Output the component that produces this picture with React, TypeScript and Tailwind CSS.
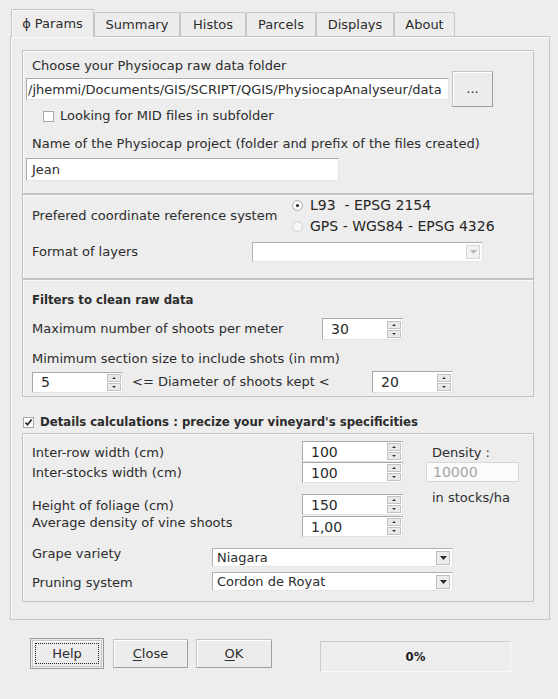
import React from 'react';

// small triangles used by spin boxes and combo boxes
function Tri({ up, w = 5, h = 3, color = '#333' }: { up?: boolean; w?: number; h?: number; color?: string }) {
  return (
    <svg width={w} height={h} viewBox={`0 0 ${w} ${h}`}>
      <path d={up ? `M${w / 2} 0L${w} ${h}H0z` : `M0 0H${w}L${w / 2} ${h}z`} fill={color} />
    </svg>
  );
}

function SpinBox({ value, className }: { value: string; className: string }) {
  return (
    <div className={`flex items-center bg-white border border-t-[#a9a9a9] border-l-[#a9a9a9] border-r-[#e2e2e2] border-b-[#e2e2e2] ${className}`}>
      <span className="flex-1 pl-[8px] text-[14px] leading-none text-[#2a2a2a]">{value}</span>
      <div className="flex flex-col gap-[1px] mr-[1px]">
        <div className="w-[14px] h-[8px] bg-[#e9e9e9] border border-[#c2c2c2] flex items-center justify-center">
          <Tri up w={4} h={2} />
        </div>
        <div className="w-[14px] h-[8px] bg-[#e9e9e9] border border-[#c2c2c2] flex items-center justify-center">
          <Tri w={4} h={2} />
        </div>
      </div>
    </div>
  );
}

function Combo({ value, className, disabled }: { value?: string; className: string; disabled?: boolean }) {
  return (
    <div className={`flex items-center bg-white border border-t-[#b0b0b0] border-l-[#b0b0b0] border-r-[#e4e4e4] border-b-[#e4e4e4] ${className}`}>
      <span className="flex-1 pl-[4px] leading-none">{value}</span>
      <div className={`w-[14px] h-[14px] mr-[2px] border flex items-center justify-center ${disabled ? 'border-[#d6d6d6] bg-[#f2f2f2]' : 'border-[#bdbdbd] bg-[#ececec]'}`}>
        <Tri w={7} h={4} color={disabled ? '#b8b8b8' : '#2a2a2a'} />
      </div>
    </div>
  );
}

function Radio({ checked, label }: { checked?: boolean; label: string }) {
  return (
    <div className="flex items-center h-[21px]">
      <div className={`w-[11px] h-[11px] rounded-full border flex items-center justify-center ${checked ? 'border-[#b0b0b0] bg-[#fafafa]' : 'border-[#d2d2d2] bg-[#f6f6f6]'}`}>
        {checked && <div className="w-[3px] h-[3px] rounded-full bg-[#222]" />}
      </div>
      <span className="ml-[7px] text-[14px] text-[#252525] whitespace-pre">{label}</span>
    </div>
  );
}

function Check({ checked }: { checked?: boolean }) {
  return (
    <div className="w-[11px] h-[11px] bg-white border border-[#a8a8a8] flex items-center justify-center">
      {checked && (
        <svg width="9" height="9" viewBox="0 0 9 9">
          <path d="M1.5 4.5L3.5 6.8L7.6 1.6" stroke="#222" strokeWidth="1.6" fill="none" />
        </svg>
      )}
    </div>
  );
}

function Button({ children, className }: { children: React.ReactNode; className: string }) {
  return (
    <div className={`flex items-center justify-center bg-[#ececec] border border-[#c4c4c4] border-b-[#9e9e9e] border-r-[#9e9e9e] shadow-[inset_1px_1px_0_#ffffff] ${className}`}>
      {children}
    </div>
  );
}

const tabs = [
  { name: 'ϕ Params', w: 'w-[83px]', active: true },
  { name: 'Summary', w: 'w-[86px]' },
  { name: 'Histos', w: 'w-[66px]' },
  { name: 'Parcels', w: 'w-[70px]' },
  { name: 'Displays', w: 'w-[78px]' },
  { name: 'About', w: 'w-[61px]' },
];

const group = 'border border-[#c3c3c3] shadow-[inset_1px_1px_0_#f9f9f9]';
// bold captions in the dialog are narrower than regular bold
const boldCaption = "font-bold font-['DejaVu_Sans_Condensed','DejaVu_Sans',sans-serif] font-stretch-condensed";

export default function App() {
  return (
    <div className="w-[558px] h-[699px] bg-[#ededed] font-['DejaVu_Sans',sans-serif] text-[13px] text-[#2c2c2c] pt-[9px] pl-[10px] overflow-hidden">
      {/* tab bar */}
      <div className="flex items-end h-[27px] pl-[1px]">
        {tabs.map((t) =>
          t.active ? (
            <div key={t.name} className={`${t.w} h-[28px] -mb-px relative z-10 bg-[#ededed] border border-b-0 border-[#c3c3c3] rounded-t-[2px] flex items-center justify-center shadow-[inset_1px_1px_0_#fafafa]`}>
              {t.name}
            </div>
          ) : (
            <div key={t.name} className={`${t.w} h-[24px] bg-[#ececec] border border-b-0 border-[#c6c6c6] rounded-t-[2px] flex items-center justify-center pt-[1px]`}>
              {t.name}
            </div>
          )
        )}
      </div>

      {/* panel */}
      <div className="w-[540px] h-[584px] border border-[#c6c6c6] shadow-[inset_1px_1px_0_#fafafa] pt-[13px] pl-[11px] pr-[15px]">
        {/* folder */}
        <div className={`${group} h-[144px] flex flex-col`}>
          <div className="pt-[7px] pl-[9px] leading-[16px]">Choose your Physiocap raw data folder</div>
          <div className="-mt-[3px] h-[36px] flex items-center">
            <div className="ml-[3px] w-[423px] h-[22px] bg-white border border-t-[#a9a9a9] border-l-[#a9a9a9] border-r-[#e4e4e4] border-b-[#e4e4e4] overflow-hidden flex items-center whitespace-nowrap">
              <span className="pl-[1px] leading-none">/jhemmi/Documents/GIS/SCRIPT/QGIS/PhysiocapAnalyseur/data</span>
            </div>
            <Button className="ml-[3px] w-[41px] h-[36px]">...</Button>
          </div>
          <div className="mt-[1px] h-[16px] flex items-center pl-[20px]">
            <Check />
            <span className="ml-[6px]">Looking for MID files in subfolder</span>
          </div>
          <div className="mt-[12px] pl-[9px] leading-[16px]">Name of the Physiocap project (folder and prefix of the files created)</div>
          <div className="mt-[6px] ml-[3px] w-[313px] h-[23px] bg-white border border-t-[#a9a9a9] border-l-[#a9a9a9] border-r-[#e4e4e4] border-b-[#e4e4e4] flex items-center pl-[5px]">
            Jean
          </div>
        </div>

        {/* coordinate system */}
        <div className={`${group} h-[85px]`}>
          <div className="h-[42px] flex items-center">
            <div className="w-[269px] pl-[9px]">Prefered coordinate reference system</div>
            <div className="flex flex-col">
              <Radio checked label="L93  - EPSG 2154" />
              <Radio label="GPS - WGS84 - EPSG 4326" />
            </div>
          </div>
          <div className="mt-[5px] h-[20px] flex items-center">
            <div className="w-[229px] pl-[9px]">Format of layers</div>
            <Combo disabled className="w-[231px] h-[20px]" />
          </div>
        </div>

        {/* filters */}
        <div className={`${group} h-[118px]`}>
          <div className={`pt-[12px] pl-[9px] leading-[16px] ${boldCaption}`}>Filters to clean raw data</div>
          <div className="mt-[10px] h-[22px] flex items-center">
            <div className="w-[299px] pl-[9px]">Maximum number of shoots per meter</div>
            <SpinBox value="30" className="w-[81px] h-[22px]" />
          </div>
          <div className="mt-[11px] pl-[9px] leading-[16px]">Mimimum section size to include shots (in mm)</div>
          <div className="mt-[4px] h-[22px] flex items-center">
            <SpinBox value="5" className="ml-[9px] w-[91px] h-[21px]" />
            <div className="w-[249px] pl-[9px]">&lt;= Diameter of shoots kept &lt;</div>
            <SpinBox value="20" className="w-[81px] h-[22px]" />
          </div>
        </div>

        <div className="h-[36px] pt-[14px] flex items-center pl-[1px]">
          <Check checked />
          <span className={`ml-[6px] ${boldCaption}`}>Details calculations : precize your vineyard's specificities</span>
        </div>

        {/* details */}
        <div className={`${group} h-[169px] pt-[7px]`}>
          <div className="flex">
            <div className="w-[381px]">
              <div className="h-[21px] flex items-center">
                <div className="w-[279px] pl-[9px] pt-[3px]">Inter-row width (cm)</div>
                <SpinBox value="100" className="w-[101px] h-[21px]" />
              </div>
              <div className="h-[21px] flex items-center">
                <div className="w-[279px] pl-[9px]">Inter-stocks width (cm)</div>
                <SpinBox value="100" className="w-[101px] h-[21px]" />
              </div>
              <div className="mt-[11px] h-[21px] flex items-center">
                <div className="w-[279px] pl-[9px] pt-[3px]">Height of foliage (cm)</div>
                <SpinBox value="150" className="w-[101px] h-[21px]" />
              </div>
              <div className="mt-[1px] h-[21px] flex items-center">
                <div className="w-[279px] pl-[9px] pb-[7px]">Average density of vine shoots</div>
                <SpinBox value="1,00" className="w-[101px] h-[21px]" />
              </div>
            </div>
            <div className="ml-[22px] flex flex-col">
              <div className="pl-[6px] pt-[4px] leading-[16px]">Density :</div>
              <div className="mt-[1px] w-[93px] h-[20px] bg-[#fbfbfb] border border-[#d6d6d6] flex items-center pl-[6px] text-[14px] text-[#a4a4a4]">
                10000
              </div>
              <div className="pl-[6px] mt-[8px] leading-[16px]">in stocks/ha</div>
            </div>
          </div>
          <div className="mt-[11px] h-[19px] flex items-center">
            <div className="w-[189px] pl-[9px] pb-[7px]">Grape variety</div>
            <Combo value="Niagara" className="w-[241px] h-[19px]" />
          </div>
          <div className="mt-[5px] h-[19px] flex items-center">
            <div className="w-[189px] pl-[9px] pt-[3px]">Pruning system</div>
            <Combo value="Cordon de Royat" className="w-[241px] h-[19px]" />
          </div>
        </div>
      </div>

      {/* bottom buttons */}
      <div className="mt-[18px] flex items-start">
        <div className="ml-[20px] w-[74px] h-[31px] border border-[#9a9a9a] bg-[#ececec] p-[1px] flex">
          <div className="flex-1 border border-[#c8c8c8] shadow-[inset_1px_1px_0_#fff] p-[2px] flex">
            <div className="flex-1 border border-dotted border-[#222] flex items-center justify-center">Help</div>
          </div>
        </div>
        <Button className="ml-[9px] mt-[1px] w-[75px] h-[29px]">
          <span><span className="underline underline-offset-2">C</span>lose</span>
        </Button>
        <Button className="ml-[8px] mt-[1px] w-[76px] h-[29px]">
          <span><span className="underline underline-offset-2">O</span>K</span>
        </Button>
        <div className={`ml-[48px] mt-[3px] w-[191px] h-[31px] border border-[#cdcdcd] border-b-[#fafafa] border-r-[#fafafa] flex items-center justify-center text-[#1c1c1c] ${boldCaption}`}>
          0%
        </div>
      </div>
    </div>
  );
}
